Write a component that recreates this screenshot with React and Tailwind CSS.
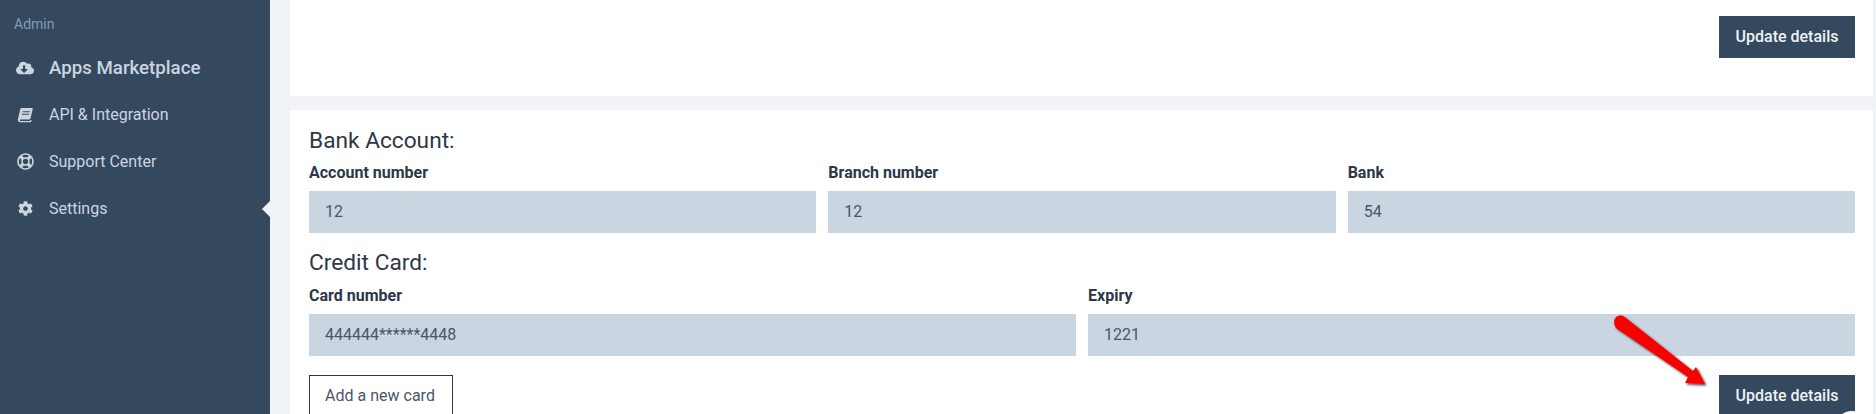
import React from "react";
import { FaCloudDownloadAlt, FaRegLifeRing, FaCog } from "react-icons/fa";

const BookIcon = ({ className, size }) => (
  <svg className={className} width={size} height={size} viewBox="0 0 16 16" fill="currentColor">
    <path d="M4.6 1 H15 Q16 1 15.7 2.2 L13.4 11.6 Q13.2 12.4 12.3 12.4 H3.6 Q2.7 12.4 2.8 13.2 Q2.9 13.9 3.7 13.9 H13.1 L13.4 12.9 L14.7 13 L14.2 14.7 Q14 15.2 13.4 15.2 H3 Q0.7 15.2 0.8 12.8 Q0.8 12.4 1 11.8 L3.2 2.4 Q3.5 1 4.6 1 Z M5.8 4.2 L5.6 5.2 H12.6 L12.8 4.2 Z M5.1 6.8 L4.9 7.8 H11.9 L12.1 6.8 Z" fillRule="evenodd" />
  </svg>
);

const navItems = [
  { label: "Apps Marketplace", icon: FaCloudDownloadAlt, size: 18, big: true },
  { label: "API & Integration", icon: BookIcon, size: 16 },
  { label: "Support Center", icon: FaRegLifeRing, size: 17 },
  { label: "Settings", icon: FaCog, size: 15, active: true },
];

const Field = ({ label, value }) => (
  <div className="min-w-0">
    <div className="h-[23px] text-base leading-[23px] font-bold text-[#2d3748]">{label}</div>
    <div className="mt-[7px] h-[42px] bg-[#c9d6e2] px-4 text-base leading-[42px] text-[#4a5568]">{value}</div>
  </div>
);

const UpdateButton = () => (
  <button className="h-[42px] w-[136px] shrink-0 bg-[#34495e] text-base font-medium text-[#edf2f7]">
    Update details
  </button>
);

const App = () => {
  return (
    <div className="relative flex h-[414px] w-[1876px] overflow-hidden bg-[#f0f4f8] font-['Roboto',sans-serif]">
      <aside className="h-full w-[270px] shrink-0 bg-[#34495e] pt-[14px]">
        <div className="h-5 pl-[14px] text-sm leading-5 text-[#7f9cbb]">Admin</div>
        <nav className="mt-[10px]">
          {navItems.map((item) => (
            <div key={item.label} className="relative flex h-[47px] items-center pl-[16px]">
              <span className="flex w-[18px] shrink-0 justify-center text-[#cbd5e0]">
                <item.icon size={item.size} />
              </span>
              <span className={item.big ? "ml-[15px] mt-[2px] text-[18.7px] font-medium text-[#cbd5e0]" : "ml-[15px] text-base text-[#cbd5e0]"}>
                {item.label}
              </span>
              {item.active && (
                <span className="absolute right-0 top-1/2 h-0 w-0 -translate-y-1/2 border-y-[8px] border-r-[8px] border-y-transparent border-r-[#f0f4f8]" />
              )}
            </div>
          ))}
        </nav>
      </aside>

      <main className="min-w-0 flex-1 pl-5 pr-[3px]">
        <section className="flex h-[96px] justify-end bg-white pr-[18px] pt-4">
          <UpdateButton />
        </section>

        <section className="mt-[14px] bg-white px-[19px] pr-[18px] pt-[16px]">
          <h2 className="h-[30px] text-[22.7px] leading-[30px] text-[#2d3748]">Bank Account:</h2>
          <div className="mt-[5px] grid grid-cols-3 gap-3">
            <Field label="Account number" value="12" />
            <Field label="Branch number" value="12" />
            <Field label="Bank" value="54" />
          </div>
          <h2 className="mt-[15px] h-[30px] text-[22.7px] leading-[30px] text-[#2d3748]">Credit Card:</h2>
          <div className="mt-[6px] grid grid-cols-2 gap-3">
            <Field label="Card number" value="444444******4448" />
            <Field label="Expiry" value="1221" />
          </div>
          <div className="mt-[19px] flex justify-between">
            <button className="h-[42px] w-[144px] border border-[#2d3748] pr-[2px] text-base text-[#4a5568]">Add a new card</button>
            <UpdateButton />
          </div>
        </section>
      </main>

      {/* annotation arrow on top of the screenshot */}
      <svg className="absolute left-[1605px] top-[310px]" width="115" height="90" viewBox="0 0 115 90">
        <defs>
          <filter id="arrowShadow" x="-20%" y="-20%" width="140%" height="140%">
            <feDropShadow dx="1.5" dy="1.5" stdDeviation="1.2" floodColor="#000" floodOpacity="0.75" />
          </filter>
        </defs>
        <path
          d="M11 18 Q7 12 11 7 Q16 3 21 8 L88 61 L91 57 L100 74 L80 73 L83 67 Z"
          fill="#f80000"
          filter="url(#arrowShadow)"
        />
      </svg>

      {/* chat widget peeking in from the bottom */}
      <div className="absolute left-[1835px] top-[411px] h-[34px] w-[34px] rounded-full bg-white shadow-lg" />
    </div>
  );
};

export default App;
